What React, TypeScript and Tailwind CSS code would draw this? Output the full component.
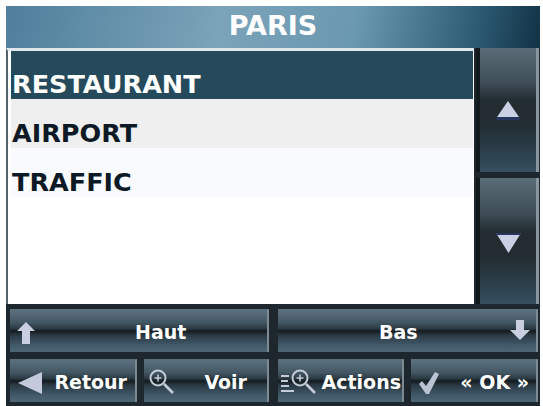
import type { ReactNode } from 'react';

const btn =
  'flex items-center border-r-2 border-r-[#7d8a92] border-t border-t-[#5d6f7b] bg-[linear-gradient(180deg,#5c7180_0%,#435663_30%,#2b3a43_44%,#141b1f_50%,#2a3a44_60%,#425a6a_85%,#4d6675_100%)] pt-[3px] text-white font-bold text-[19px] leading-none';

function ArrowUp() {
  return (
    <svg width="18" height="22" viewBox="0 0 18 22" fill="#c9cfe0" className="shrink-0">
      <path d="M9 0 18 9H13V22H5V9H0Z" />
    </svg>
  );
}

function ArrowDown() {
  return (
    <svg width="20" height="20" viewBox="0 0 20 20" fill="#c9cfe0" className="mb-[6px] shrink-0">
      <path d="M6 0h8v10h6L10 20 0 10h6Z" />
    </svg>
  );
}

function Lens({ lines }: { lines?: boolean }) {
  return (
    <svg
      width={lines ? 35 : 27}
      height="25"
      viewBox={lines ? '0 0 35 25' : '0 0 27 25'}
      fill="none"
      stroke="#c4cad8"
      className="mb-[2px] shrink-0"
    >
      {lines && <path d="M0 7h8M0 12h7M0 17h8M0 22h13" strokeWidth="2" />}
      <g transform={lines ? 'translate(10 0)' : 'translate(1 0)'}>
        <circle cx="9" cy="9" r="7.5" strokeWidth="2" />
        <path d="M9 5.5v7M5.5 9h7" strokeWidth="1.6" />
        <path d="M15 15l9 9" strokeWidth="2.6" />
      </g>
    </svg>
  );
}

function ScrollBtn({ children, className }: { children: ReactNode; className: string }) {
  return (
    <div
      className={`flex items-center justify-center border-l-4 border-l-[#12191d] border-r-[3px] border-r-[#8a969d] bg-[linear-gradient(180deg,#5a6c77_0%,#3e4d57_28%,#232d31_42%,#222c31_62%,#2f4553_90%,#36505f_100%)] ${className}`}
    >
      {children}
    </div>
  );
}

function ActionBtn({ children, className }: { children: ReactNode; className: string }) {
  return <div className={`${btn} ${className}`}>{children}</div>;
}

export default function App() {
  return (
    <div className="h-[406px] w-[543px] overflow-hidden bg-white pt-[6px] pl-[6px] pr-[3px] font-['DejaVu_Sans',sans-serif]">
      <div className="flex h-[400px] flex-col bg-[#1d272d]">
        <div className="flex h-[42px] shrink-0 items-center justify-center bg-[linear-gradient(100deg,#4f7f9c_0%,#7ba3b9_40%,#6b99b1_65%,#2c5a72_88%,#123246_100%)] pb-[1px] text-[27px] font-bold text-white">
          PARIS
        </div>
        <div className="flex h-[256px] shrink-0">
          <div className="w-[468px] shrink-0 border-l-2 border-l-[#55636c] border-t-[3px] border-t-[#dfe7ec] bg-white pl-[3px] pr-px text-[25.5px] font-bold">
            <div className="flex h-[48px] items-end bg-[#244a5c] pl-px leading-[29px] text-white">RESTAURANT</div>
            <div className="flex h-[49px] items-end bg-[#f0efef] pl-px leading-[29px] text-[#0d1a26]">AIRPORT</div>
            <div className="flex h-[49px] items-end bg-[#f8fafd] pl-px leading-[29px] text-[#0d1a26]">TRAFFIC</div>
          </div>
          <div className="flex flex-1 flex-col gap-[6px] pl-[2px] pr-px">
            <ScrollBtn className="h-[124px] pr-[1px]">
              <svg width="24" height="24" viewBox="0 0 24 24">
                <path d="M12 3 23 19H1Z" fill="#c9d0e4" />
                <path d="M1 19H23L24 22H0Z" fill="#25335f" />
              </svg>
            </ScrollBtn>
            <ScrollBtn className="h-[126px] pt-[3px]">
              <svg width="25" height="20" viewBox="0 0 25 20">
                <path d="M0 0H25L12.5 20Z" fill="#c9d0e4" />
                <path d="M0 0H25L24 2H1Z" fill="#25335f" />
              </svg>
            </ScrollBtn>
          </div>
        </div>
        <div className="flex h-[48px] shrink-0 gap-[9px] pt-[5px] pl-[4px] pr-[2px]">
          <ActionBtn className="w-[259px] pl-[7px]">
            <ArrowUp />
            <span className="ml-[100px]">Haut</span>
          </ActionBtn>
          <ActionBtn className="flex-1 pl-[101px] pr-[6px] justify-between">
            Bas
            <ArrowDown />
          </ActionBtn>
        </div>
        <div className="flex h-[52px] shrink-0 pt-[7px] pb-[2px] pl-[4px] pr-[2px]">
          <ActionBtn className="w-[127px] justify-between pl-[8px] pr-[8px]">
            <svg width="24" height="22" viewBox="0 0 24 22">
              <path d="M24 0V22L0 11Z" fill="#c4c9dc" />
            </svg>
            Retour
          </ActionBtn>
          <ActionBtn className="ml-[7px] w-[125px] justify-between pl-[4px] pr-[20px]">
            <Lens />
            Voir
          </ActionBtn>
          <ActionBtn className="ml-[9px] w-[126px] justify-between pl-[3px] pr-[1px]">
            <Lens lines />
            Actions
          </ActionBtn>
          <ActionBtn className="ml-[7px] flex-1 justify-between pl-[8px] pr-[7px]">
            <svg width="20" height="22" viewBox="0 0 20 22" className="shrink-0">
              <path d="M0 12l3-3 4 5L16 0l4 2-10 20H7Z" fill="#b9c3d2" />
            </svg>
            « OK »
          </ActionBtn>
        </div>
      </div>
    </div>
  );
}
